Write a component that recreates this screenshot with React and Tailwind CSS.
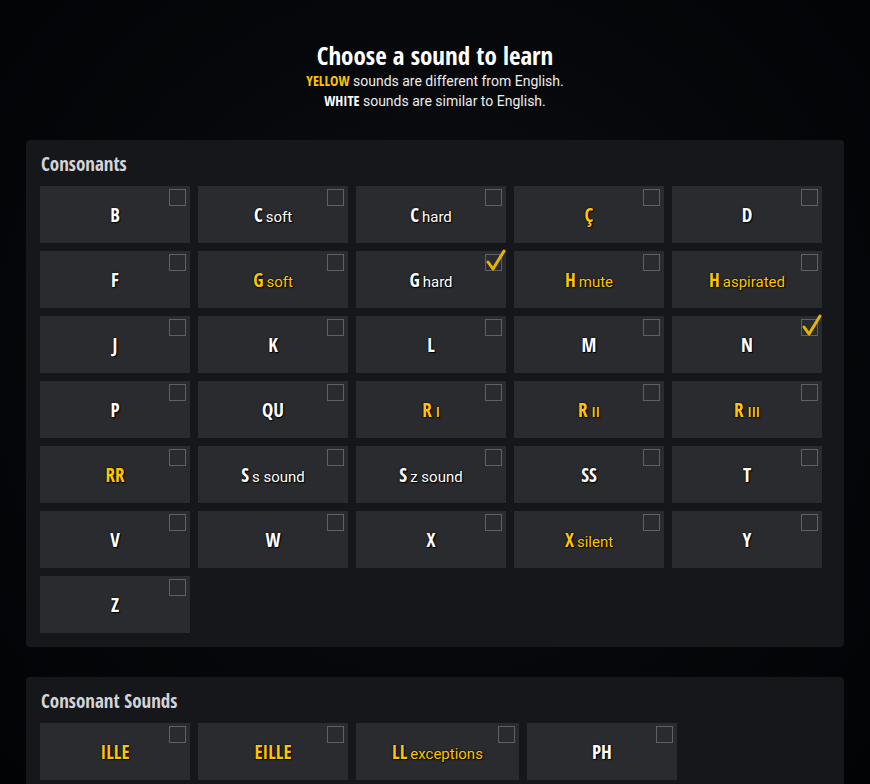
const cond = "font-['Open_Sans_Condensed','DejaVu_Sans_Condensed','Open_Sans',sans-serif] [font-stretch:75%]";

const consonants = [
  { l: 'B' },
  { l: 'C', s: 'soft' },
  { l: 'C', s: 'hard' },
  { l: 'Ç', y: true },
  { l: 'D' },
  { l: 'F' },
  { l: 'G', s: 'soft', y: true },
  { l: 'G', s: 'hard', done: true },
  { l: 'H', s: 'mute', y: true },
  { l: 'H', s: 'aspirated', y: true },
  { l: 'J' },
  { l: 'K' },
  { l: 'L' },
  { l: 'M' },
  { l: 'N', done: true },
  { l: 'P' },
  { l: 'QU' },
  { l: 'R', n: 'I', y: true },
  { l: 'R', n: 'II', y: true },
  { l: 'R', n: 'III', y: true },
  { l: 'RR', y: true },
  { l: 'S', s: 's sound' },
  { l: 'S', s: 'z sound' },
  { l: 'SS' },
  { l: 'T' },
  { l: 'V' },
  { l: 'W' },
  { l: 'X' },
  { l: 'X', s: 'silent', y: true },
  { l: 'Y' },
  { l: 'Z' },
];

const sounds = [
  { l: 'ILLE', y: true },
  { l: 'EILLE', y: true },
  { l: 'LL', s: 'exceptions', y: true },
  { l: 'PH' },
];

function Check({ done }) {
  return (
    <div className="absolute right-[4px] top-[3px] w-[17px] h-[17px] border border-[#5f6063]">
      {done && (
        <svg className="absolute -left-[1px] -top-[7px]" width="22" height="24" viewBox="0 0 22 24">
          <path d="M3 14 L8 21 L19 3" fill="none" stroke="#e6b400" strokeWidth="3" strokeLinecap="round" strokeLinejoin="round" />
        </svg>
      )}
    </div>
  );
}

function Tile({ t, wide }) {
  const color = t.y ? 'text-[#ffc400]' : 'text-white';
  return (
    <div className={`relative h-[57px] bg-[#2a2b2e] flex items-center justify-center ${wide ? 'px-[36px] min-w-[150px]' : 'w-[150px]'}`}>
      <Check done={t.done} />
      <div className={`flex items-baseline mt-[1px] ${color} [text-shadow:0_0_2px_#000,1px_1px_1px_#000]`}>
        <span className={`${cond} font-bold text-[19px]`}>{t.l}</span>
        {t.s && <span className="font-['Roboto',sans-serif] text-[15px] ml-[3px]">{t.s}</span>}
        {t.n && <span className={`${cond} font-bold text-[14px] ml-[4px]`}>{t.n}</span>}
      </div>
    </div>
  );
}

function Panel({ title, children }) {
  return (
    <section className="mx-[26px] bg-[#16171a] rounded-[4px] px-[14px] pt-[12px] pb-[14px]">
      <h2 className={`${cond} font-bold text-[19px] text-[#d4d4d6] mb-[10px] pl-[1px] leading-[24px]`}>{title}</h2>
      {children}
    </section>
  );
}

export default function App() {
  return (
    <div className="min-h-[784px] w-full bg-[radial-gradient(ellipse_at_50%_45%,#0e1013_0%,#05070a_55%,#020305_100%)] overflow-hidden pt-[38px]">
      <header className="text-center mb-[29px]">
        <h1 className={`${cond} font-bold text-[25px] text-white leading-[34px]`}>Choose a sound to learn</h1>
        <p className="font-['Roboto',sans-serif] text-[14px] text-[#ececec] leading-[20px] mt-[-1px]">
          <span className={`${cond} font-bold text-[#ffc400]`}>YELLOW</span> sounds are different from English.
        </p>
        <p className="font-['Roboto',sans-serif] text-[14px] text-[#ececec] leading-[20px]">
          <span className={`${cond} font-bold text-white`}>WHITE</span> sounds are similar to English.
        </p>
      </header>

      <Panel title="Consonants">
        <div className="grid grid-cols-[repeat(5,150px)] gap-[8px]">
          {consonants.map((t, i) => (
            <Tile key={i} t={t} />
          ))}
        </div>
      </Panel>

      <div className="h-[30px]" />

      <Panel title="Consonant Sounds">
        <div className="flex gap-[8px]">
          {sounds.map((t, i) => (
            <Tile key={i} t={t} wide />
          ))}
        </div>
      </Panel>
    </div>
  );
}
